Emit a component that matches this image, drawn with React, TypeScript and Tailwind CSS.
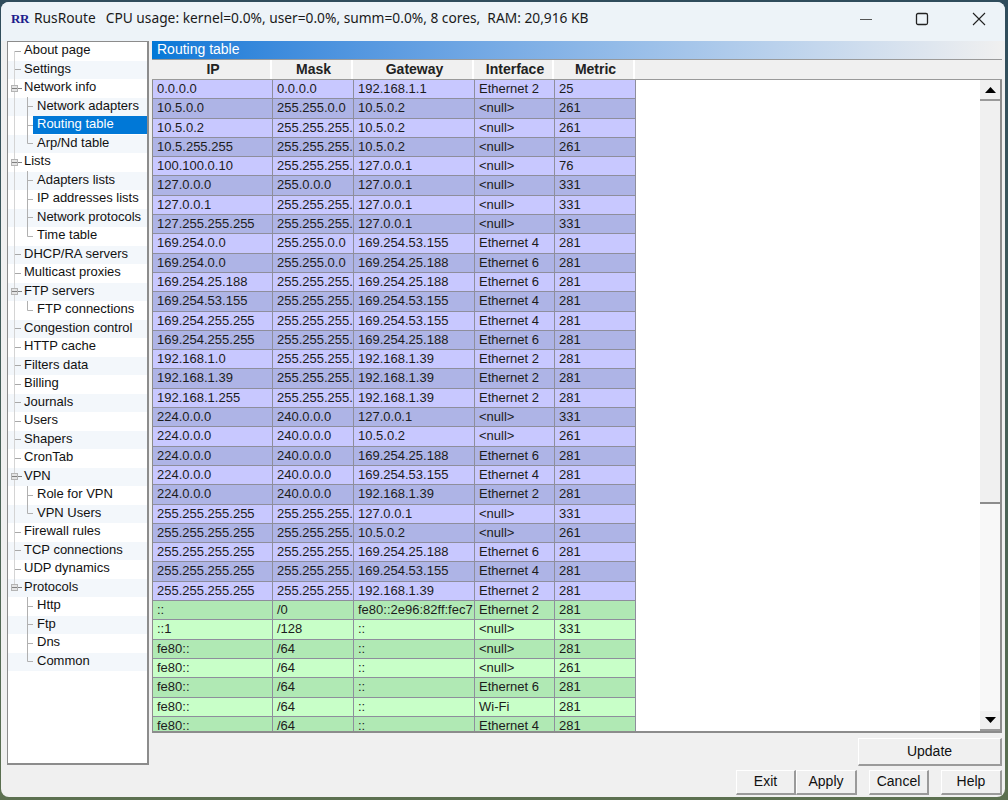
const tree: { label: string; level: 0 | 1; open?: boolean; last?: boolean; selected?: boolean }[] = [
  { label: 'About page', level: 0 },
  { label: 'Settings', level: 0 },
  { label: 'Network info', level: 0, open: true },
  { label: 'Network adapters', level: 1 },
  { label: 'Routing table', level: 1, selected: true },
  { label: 'Arp/Nd table', level: 1, last: true },
  { label: 'Lists', level: 0, open: true },
  { label: 'Adapters lists', level: 1 },
  { label: 'IP addresses lists', level: 1 },
  { label: 'Network protocols', level: 1 },
  { label: 'Time table', level: 1, last: true },
  { label: 'DHCP/RA servers', level: 0 },
  { label: 'Multicast proxies', level: 0 },
  { label: 'FTP servers', level: 0, open: true },
  { label: 'FTP connections', level: 1, last: true },
  { label: 'Congestion control', level: 0 },
  { label: 'HTTP cache', level: 0 },
  { label: 'Filters data', level: 0 },
  { label: 'Billing', level: 0 },
  { label: 'Journals', level: 0 },
  { label: 'Users', level: 0 },
  { label: 'Shapers', level: 0 },
  { label: 'CronTab', level: 0 },
  { label: 'VPN', level: 0, open: true },
  { label: 'Role for VPN', level: 1 },
  { label: 'VPN Users', level: 1, last: true },
  { label: 'Firewall rules', level: 0 },
  { label: 'TCP connections', level: 0 },
  { label: 'UDP dynamics', level: 0 },
  { label: 'Protocols', level: 0, open: true },
  { label: 'Http', level: 1 },
  { label: 'Ftp', level: 1 },
  { label: 'Dns', level: 1 },
  { label: 'Common', level: 1, last: true },
];

const M = '255.255.255.255';
const v4 = [
  ['0.0.0.0', '0.0.0.0', '192.168.1.1', 'Ethernet 2', '25'],
  ['10.5.0.0', '255.255.0.0', '10.5.0.2', '<null>', '261'],
  ['10.5.0.2', M, '10.5.0.2', '<null>', '261'],
  ['10.5.255.255', M, '10.5.0.2', '<null>', '261'],
  ['100.100.0.10', M, '127.0.0.1', '<null>', '76'],
  ['127.0.0.0', '255.0.0.0', '127.0.0.1', '<null>', '331'],
  ['127.0.0.1', M, '127.0.0.1', '<null>', '331'],
  ['127.255.255.255', M, '127.0.0.1', '<null>', '331'],
  ['169.254.0.0', '255.255.0.0', '169.254.53.155', 'Ethernet 4', '281'],
  ['169.254.0.0', '255.255.0.0', '169.254.25.188', 'Ethernet 6', '281'],
  ['169.254.25.188', M, '169.254.25.188', 'Ethernet 6', '281'],
  ['169.254.53.155', M, '169.254.53.155', 'Ethernet 4', '281'],
  ['169.254.255.255', M, '169.254.53.155', 'Ethernet 4', '281'],
  ['169.254.255.255', M, '169.254.25.188', 'Ethernet 6', '281'],
  ['192.168.1.0', M, '192.168.1.39', 'Ethernet 2', '281'],
  ['192.168.1.39', M, '192.168.1.39', 'Ethernet 2', '281'],
  ['192.168.1.255', M, '192.168.1.39', 'Ethernet 2', '281'],
  ['224.0.0.0', '240.0.0.0', '127.0.0.1', '<null>', '331'],
  ['224.0.0.0', '240.0.0.0', '10.5.0.2', '<null>', '261'],
  ['224.0.0.0', '240.0.0.0', '169.254.25.188', 'Ethernet 6', '281'],
  ['224.0.0.0', '240.0.0.0', '169.254.53.155', 'Ethernet 4', '281'],
  ['224.0.0.0', '240.0.0.0', '192.168.1.39', 'Ethernet 2', '281'],
  [M, M, '127.0.0.1', '<null>', '331'],
  [M, M, '10.5.0.2', '<null>', '261'],
  [M, M, '169.254.25.188', 'Ethernet 6', '281'],
  [M, M, '169.254.53.155', 'Ethernet 4', '281'],
  [M, M, '192.168.1.39', 'Ethernet 2', '281'],
];
const v6 = [
  ['::', '/0', 'fe80::2e96:82ff:fec7', 'Ethernet 2', '281'],
  ['::1', '/128', '::', '<null>', '331'],
  ['fe80::', '/64', '::', '<null>', '281'],
  ['fe80::', '/64', '::', '<null>', '261'],
  ['fe80::', '/64', '::', 'Ethernet 6', '281'],
  ['fe80::', '/64', '::', 'Wi-Fi', '281'],
  ['fe80::', '/64', '::', 'Ethernet 4', '281'],
];

const widths = ['w-[120px]', 'w-[81px]', 'w-[121px]', 'w-[80px]', 'w-[81px]'];
const headers = ['IP', 'Mask', 'Gateway', 'Interface', 'Metric'];

function TreeRow({ item, index }: { item: (typeof tree)[number]; index: number }) {
  // the top level line stops at Protocols, children hang off the 27px line
  const lastTop = index >= 29;
  return (
    <div className={`flex h-[18.5px] items-center ${index % 2 === 1 ? 'bg-[#f3f7fb]' : ''}`}>
      <svg width="25" height="19" className="shrink-0" fill="none">
        {!lastTop && <path d={index === 0 ? 'M6.5 9V19' : 'M6.5 0V19'} stroke="#d4d4d4" />}
        {item.level === 0 && lastTop && <path d="M6.5 0V6" stroke="#d4d4d4" />}
        {item.level === 0 && !item.open && <path d="M7 9.5H13" stroke="#a8a8a8" />}
        {item.open && (
          <>
            <rect x="3.5" y="6.5" width="6" height="6" fill="#e4e4e4" stroke="#b4b4b4" />
            <path d="M4 9.5H9M10 9.5H14" stroke="#808080" />
          </>
        )}
        {item.level === 1 && <path d={item.last ? 'M19.5 0V9.5H25' : 'M19.5 0V19M20 9.5H25'} stroke="#b0b0b0" />}
      </svg>
      <span
        className={`h-[18px] flex-1 whitespace-nowrap text-[13px] leading-[15px] ${
          item.level === 1 ? 'pl-[4px]' : '-ml-[9px]'
        } ${item.selected ? 'bg-[#0078d7] text-white' : 'text-[#111]'}`}
      >
        {item.label}
      </span>
    </div>
  );
}

function Row({ cells, even, six }: { cells: string[]; even: boolean; six: boolean }) {
  const bg = six ? (even ? 'bg-[#c8ffc8]' : 'bg-[#b0e9b4]') : even ? 'bg-[#c8c8ff]' : 'bg-[#aeb4e6]';
  return (
    <div className={`flex h-[19.3px] w-[483px] shrink-0 border-b border-[#8e8e9c] ${bg}`}>
      {cells.map((c, i) => (
        <div
          key={i}
          className={`${widths[i]} shrink-0 overflow-hidden whitespace-nowrap border-r border-[#8e8e9c] pl-[4px] pr-px text-[13px] leading-[18px] text-[#1c1c1c]`}
        >
          {c}
        </div>
      ))}
    </div>
  );
}

function Btn({ label, className = '' }: { label: string; className?: string }) {
  return (
    <button
      className={`flex items-center justify-center border-b-2 border-r-2 border-t border-l border-b-[#9a9a9a] border-r-[#9a9a9a] border-t-white border-l-white bg-[#f0f0f0] pb-px text-[14px] text-[#111] ${className}`}
    >
      {label}
    </button>
  );
}

export default function App() {
  const sans = { fontFamily: '"Liberation Sans", Arial, sans-serif' };
  return (
    <div className="h-[800px] w-[1008px] overflow-hidden bg-gradient-to-b from-[#2f4c5c] to-[#5c7050] pl-px pr-[3px] pt-[2px] pb-[3px]">
      <div className="flex h-full flex-col overflow-hidden rounded-[8px] bg-[#f0f0f0]" style={sans}>
        {/* Title bar */}
        <div className="flex h-[39px] shrink-0 items-center bg-[#edf3f8] pb-[6px] pl-[10px]">
          <span className="w-[23px] text-[13px] font-bold leading-none tracking-[-0.5px] text-[#1c1c8c] [font-family:'Liberation_Serif',serif]">
            RR
          </span>
          <span className="whitespace-nowrap text-[13.75px] text-[#1a1a1a] [font-family:'Noto_Sans',sans-serif]">
            RusRoute
            <span className="ml-[10px]">CPU usage: kernel=0.0%, user=0.0%, summ=0.0%, 8 cores,&nbsp; RAM: 20,916 KB</span>
          </span>
          <div className="ml-auto flex items-center">
            <svg width="14" height="14" className="mr-[42px]" stroke="#555" fill="none">
              <path d="M1 7.5H13" strokeWidth="1.2" />
            </svg>
            <svg width="14" height="14" className="mr-[43px]" stroke="#222" fill="none">
              <rect x="1.5" y="1.5" width="11" height="11" rx="1.5" strokeWidth="1.3" />
            </svg>
            <svg width="14" height="14" className="mr-[19px]" stroke="#222" fill="none">
              <path d="M1 1L13 13M13 1L1 13" strokeWidth="1.1" />
            </svg>
          </div>
        </div>

        <div className="flex min-h-0 flex-1 pl-[6px] pr-[3px]">
          {/* Tree */}
          <div className="h-[724px] w-[142px] shrink-0 border border-b-2 border-r-2 border-[#8c8c8c] bg-white">
            {tree.map((t, i) => (
              <TreeRow key={t.label} item={t} index={i} />
            ))}
          </div>

          {/* Right panel */}
          <div className="ml-[3px] flex min-w-0 flex-1 flex-col">
            <div className="h-[18px] shrink-0 bg-gradient-to-r from-[#0078d7] to-[#f0f0f0] pl-[5px] text-[14px] leading-[17px] text-white">
              Routing table
            </div>
            <div className="flex h-[21px] shrink-0 border-y border-[#9a9a9a] bg-[#f0f0f0]">
              {headers.map((h, i) => (
                <div
                  key={h}
                  className={`${widths[i]} shrink-0 border-r-2 border-white pl-[4px] text-center text-[14px] font-bold leading-[19px] text-[#222]`}
                >
                  {h}
                </div>
              ))}
            </div>
            <div className="flex h-[653px] shrink-0 border-b-2 border-l border-[#8c8c8c] bg-white">
              <div className="flex min-w-0 flex-1 flex-col overflow-hidden">
                {v4.map((r, i) => (
                  <Row key={i} cells={r} even={i % 2 === 0} six={false} />
                ))}
                {v6.map((r, i) => (
                  <Row key={i} cells={r} even={i % 2 === 1} six />
                ))}
              </div>
              {/* Scrollbar */}
              <div className="flex w-[22px] shrink-0 flex-col border-r-2 border-[#8c8c8c]">
                <div className="flex h-[21px] shrink-0 items-center justify-center border-b-2 border-[#9a9a9a] bg-[#f0f0f0]">
                  <svg width="11" height="6" fill="#000">
                    <path d="M5.5 0L11 6H0Z" />
                  </svg>
                </div>
                <div className="h-[403px] shrink-0 border-b-2 border-[#8c8c8c] bg-[#f0f0f0]" />
                <div className="flex-1 bg-[#f8f8f8]" />
                <div className="flex h-[20px] shrink-0 items-center justify-center border-b-2 border-[#9a9a9a] bg-[#f0f0f0]">
                  <svg width="11" height="6" fill="#000">
                    <path d="M5.5 6L11 0H0Z" />
                  </svg>
                </div>
              </div>
            </div>
            <div className="mt-[5px] flex justify-end">
              <Btn label="Update" className="h-[28px] w-[144px]" />
            </div>
            <div className="mt-[4px] flex justify-end">
              <Btn label="Exit" className="h-[25px] w-[60px] border-t-[#777] border-l-[#777]" />
              <Btn label="Apply" className="h-[25px] w-[61px]" />
              <Btn label="Cancel" className="ml-[12px] h-[25px] w-[60px]" />
              <Btn label="Help" className="ml-[12px] h-[25px] w-[61px]" />
            </div>
          </div>
        </div>
      </div>
    </div>
  );
}
